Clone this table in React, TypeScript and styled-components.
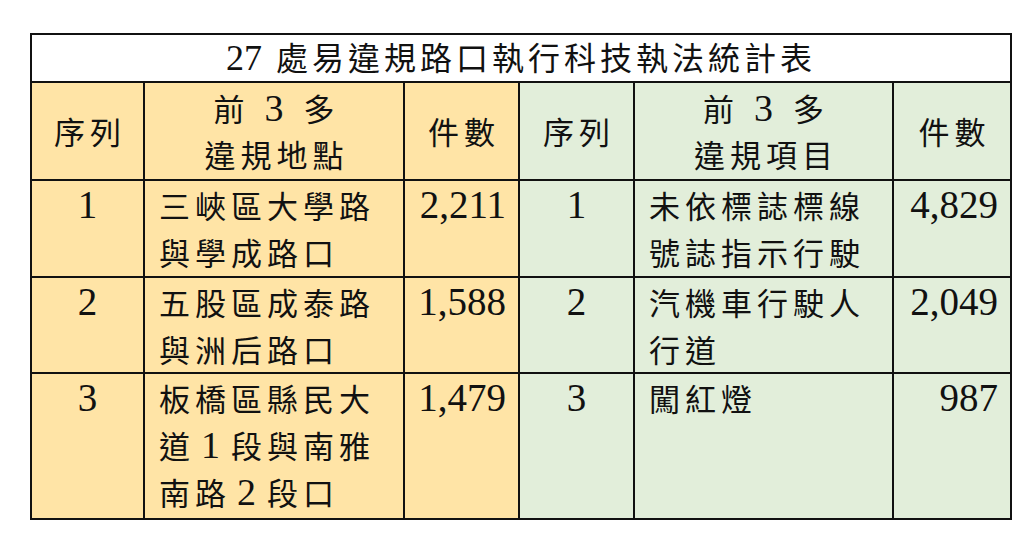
import React from "react";
import styled, { createGlobalStyle } from "styled-components";

type Tone = "orange" | "green";

interface Row {
  rank: number;
  place: string;
  placeCount: string;
  item: string;
  itemCount: string;
  height: number;
}

const rows: Row[] = [
  {
    rank: 1,
    place: "三峽區大學路與學成路口",
    placeCount: "2,211",
    item: "未依標誌標線號誌指示行駛",
    itemCount: "4,829",
    height: 97,
  },
  {
    rank: 2,
    place: "五股區成泰路與洲后路口",
    placeCount: "1,588",
    item: "汽機車行駛人行道",
    itemCount: "2,049",
    height: 96,
  },
  {
    rank: 3,
    place: "板橋區縣民大道 1 段與南雅南路 2 段口",
    placeCount: "1,479",
    item: "闖紅燈",
    itemCount: "987",
    height: 146,
  },
];

const tones: Record<Tone, string> = {
  orange: "#ffe4a6",
  green: "#e2eeda",
};

const GlobalStyle = createGlobalStyle`
  html, body {
    margin: 0;
    padding: 0;
    background: #ffffff;
  }
  body {
    font-family: "Liberation Serif", "Noto Sans CJK TC", serif;
    color: #111;
  }
`;

const Page = styled.div`
  width: 1029px;
  height: 560px;
  padding: 33px 0 0 30px;
  box-sizing: border-box;
`;

const Table = styled.table`
  border-collapse: collapse;
  table-layout: fixed;
  width: 980px;
  border: 2px solid #111;
`;

const Tr = styled.tr<{ $h: number }>`
  height: ${(p) => p.$h}px;
`;

const TitleCell = styled.th`
  background: #ffffff;
  border: 2px solid #111;
  font-weight: 400;
  font-family: "Noto Sans CJK TC", sans-serif;
  font-size: 32px;
  letter-spacing: 4px;
  text-align: center;
  padding: 0 0 4px;
  line-height: 38px;
`;

const TitleNum = styled.span`
  font-family: "Liberation Serif", serif;
  font-size: 36px;
  line-height: 1;
  letter-spacing: 0;
  margin-right: 14px;
`;

const HeadCell = styled.th<{ $tone: Tone }>`
  background: ${(p) => tones[p.$tone]};
  border: 2px solid #111;
  font-weight: 400;
  font-family: "Noto Sans CJK TC", sans-serif;
  font-size: 31px;
  letter-spacing: 5px;
  line-height: 46px;
  text-align: center;
  vertical-align: middle;
  padding: 0 0 0 5px;
`;

const Cell = styled.td<{ $tone: Tone; $align: "left" | "center" | "right" }>`
  background: ${(p) => tones[p.$tone]};
  border: 2px solid #111;
  vertical-align: top;
  text-align: ${(p) => p.$align};
  font-family: "Noto Sans CJK TC", sans-serif;
  font-size: 31px;
  line-height: 47px;
  letter-spacing: 5px;
  padding: ${(p) =>
    p.$align === "left"
      ? "0 6px 0 14px"
      : p.$align === "right"
      ? "0 12px 0 4px"
      : "0"};
  word-break: break-all;
`;

// a digit set inside Chinese text gets room on both sides, like a whole character
const InlineNum = styled.span<{ $before: number; $after: number }>`
  font-family: "Liberation Serif", serif;
  font-size: 38px;
  line-height: 1;
  letter-spacing: 0;
  padding: 0 ${(p) => p.$after}px 0 ${(p) => p.$before}px;
`;

const Num = styled.span`
  font-family: "Liberation Serif", serif;
  font-size: 39px;
  line-height: 1;
  letter-spacing: 0;
`;

function withDigits(text: string, before = 6, after = 11) {
  return text.split(/\s*(\d+)\s*/).map((part, i) =>
    i % 2 === 1 ? (
      <InlineNum key={i} $before={before} $after={after}>
        {part}
      </InlineNum>
    ) : (
      part
    )
  );
}

function App() {
  return (
    <Page>
      <GlobalStyle />
      <Table>
        <colgroup>
          <col style={{ width: 113 }} />
          <col style={{ width: 260 }} />
          <col style={{ width: 115 }} />
          <col style={{ width: 115 }} />
          <col style={{ width: 259 }} />
          <col style={{ width: 118 }} />
        </colgroup>
        <thead>
          <Tr $h={48}>
            <TitleCell colSpan={6}>
              <TitleNum>27</TitleNum>處易違規路口執行科技執法統計表
            </TitleCell>
          </Tr>
          <Tr $h={98}>
            <HeadCell $tone="orange">序列</HeadCell>
            <HeadCell $tone="orange">
              {withDigits("前 3 多", 15, 20)}
              <br />
              違規地點
            </HeadCell>
            <HeadCell $tone="orange">件數</HeadCell>
            <HeadCell $tone="green">序列</HeadCell>
            <HeadCell $tone="green">
              {withDigits("前 3 多", 15, 20)}
              <br />
              違規項目
            </HeadCell>
            <HeadCell $tone="green">件數</HeadCell>
          </Tr>
        </thead>
        <tbody>
          {rows.map((r) => (
            <Tr key={r.rank} $h={r.height}>
              <Cell $tone="orange" $align="center">
                <Num>{r.rank}</Num>
              </Cell>
              <Cell $tone="orange" $align="left">
                {withDigits(r.place)}
              </Cell>
              <Cell $tone="orange" $align="right">
                <Num>{r.placeCount}</Num>
              </Cell>
              <Cell $tone="green" $align="center">
                <Num>{r.rank}</Num>
              </Cell>
              <Cell $tone="green" $align="left">
                {withDigits(r.item)}
              </Cell>
              <Cell $tone="green" $align="right">
                <Num>{r.itemCount}</Num>
              </Cell>
            </Tr>
          ))}
        </tbody>
      </Table>
    </Page>
  );
}

export default App;
